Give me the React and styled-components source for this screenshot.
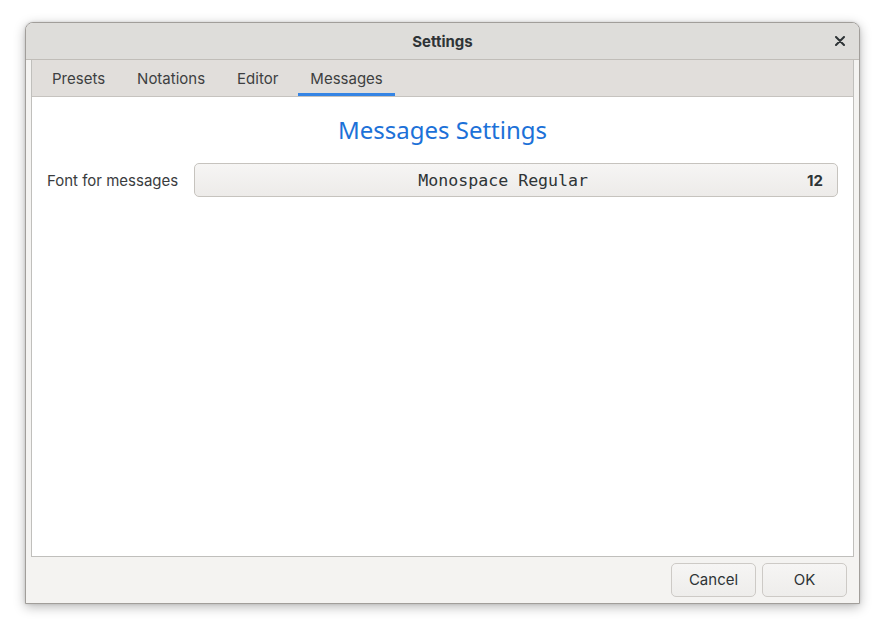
import React, { useState } from 'react';
import styled, { createGlobalStyle } from 'styled-components';

const Global = createGlobalStyle`
  html, body {
    margin: 0;
    padding: 0;
    background: #ffffff;
    font-family: Inter, "Noto Sans", sans-serif;
  }
  #root {
    width: 885px;
    height: 631px;
  }
`;

const Page = styled.div`
  width: 885px;
  height: 631px;
  padding: 22px 25px 29px 25px;
  box-sizing: border-box;
`;

const Window = styled.div`
  height: 100%;
  display: flex;
  flex-direction: column;
  border: 1px solid #a19e9a;
  border-radius: 8px 8px 0 0;
  background: #f6f5f4;
  box-shadow: 0 3px 12px rgba(0, 0, 0, 0.28), 0 0 3px rgba(0, 0, 0, 0.12);
  overflow: hidden;
`;

const TitleBar = styled.div`
  height: 36px;
  flex-shrink: 0;
  display: grid;
  grid-template-columns: 40px 1fr 40px;
  align-items: center;
  background: #deddda;
  border-bottom: 1px solid #c0bdb8;
`;

const Title = styled.div`
  grid-column: 2;
  text-align: center;
  font-size: 15px;
  font-weight: 700;
  color: #2e3436;
`;

const CloseBtn = styled.button`
  justify-self: end;
  margin-right: 10px;
  width: 18px;
  height: 18px;
  padding: 0;
  border: none;
  background: transparent;
  display: flex;
  align-items: center;
  justify-content: center;
  cursor: pointer;
`;

const Body = styled.div`
  flex: 1;
  display: flex;
  flex-direction: column;
  padding: 0 5px 0 5px;
  background: #f4f3f1;
`;

const Notebook = styled.div`
  flex: 1;
  display: flex;
  flex-direction: column;
  border: 1px solid #c0bfbc;
  border-top: none;
  background: #ffffff;
`;

const TabBar = styled.div`
  height: 36px;
  display: flex;
  gap: 8px;
  padding: 0 8px;
  background: #e1dedb;
  border-bottom: 1px solid #c6c3bf;
`;

const Tab = styled.button`
  position: relative;
  padding: 0 12px;
  border: none;
  background: transparent;
  font-family: Inter, "Noto Sans", sans-serif;
  font-size: 15px;
  color: #3d3f41;
  cursor: pointer;
  &::after {
    content: '';
    position: absolute;
    left: 0;
    right: 0;
    bottom: 0;
    height: 3px;
    background: ${p => (p.$active ? '#3584e4' : 'transparent')};
  }
`;

const Content = styled.div`
  flex: 1;
  padding: 17px 15px 0 15px;
  display: flex;
  flex-direction: column;
`;

const Heading = styled.h2`
  margin: 0 0 17px;
  text-align: center;
  font-family: "Noto Sans", sans-serif;
  font-weight: 400;
  font-size: 24px;
  line-height: 32px;
  color: #1c71d8;
`;

const Row = styled.div`
  display: flex;
  align-items: center;
  gap: 16px;
`;

const Label = styled.span`
  font-size: 15px;
  color: #3a3c3e;
`;

const FontButton = styled.button`
  flex: 1;
  height: 34px;
  display: flex;
  align-items: center;
  padding: 0 14px;
  border: 1px solid #c6c3be;
  border-radius: 5px;
  background: linear-gradient(#f6f5f4, #edebe9);
  cursor: pointer;
`;

const FontName = styled.span`
  flex: 1;
  padding-right: 10px;
  text-align: center;
  font-family: "DejaVu Sans Mono", monospace;
  font-size: 16.6px;
  color: #2e3436;
`;

const FontSize = styled.span`
  font-family: Inter, "Noto Sans", sans-serif;
  font-size: 15px;
  font-weight: 700;
  color: #2e3436;
`;

const Footer = styled.div`
  height: 45px;
  flex-shrink: 0;
  display: flex;
  justify-content: flex-end;
  align-items: center;
  gap: 6px;
  padding: 0 7px 1px 0;
  background: #f4f3f1;
`;

const DialogButton = styled.button`
  width: 85px;
  height: 34px;
  border: 1px solid #cdcac6;
  border-radius: 5px;
  background: linear-gradient(#f6f5f4, #eeedeb);
  font-family: Inter, "Noto Sans", sans-serif;
  font-size: 15px;
  color: #2e3436;
  cursor: pointer;
`;

const tabs = ['Presets', 'Notations', 'Editor', 'Messages'];

export default function App() {
  const [active, setActive] = useState('Messages');

  return (
    <>
      <Global />
      <Page>
        <Window>
          <TitleBar>
            <Title>Settings</Title>
            <CloseBtn aria-label="Close">
              <svg width="10" height="10" viewBox="0 0 10 10">
                <path d="M1 1 L9 9 M9 1 L1 9" stroke="#2e3436" strokeWidth="2" strokeLinecap="round" />
              </svg>
            </CloseBtn>
          </TitleBar>
          <Body>
            <Notebook>
              <TabBar>
                {tabs.map(t => (
                  <Tab key={t} $active={t === active} onClick={() => setActive(t)}>
                    {t}
                  </Tab>
                ))}
              </TabBar>
              <Content>
                <Heading>Messages Settings</Heading>
                <Row>
                  <Label>Font for messages</Label>
                  <FontButton>
                    <FontName>Monospace Regular</FontName>
                    <FontSize>12</FontSize>
                  </FontButton>
                </Row>
              </Content>
            </Notebook>
            <Footer>
              <DialogButton>Cancel</DialogButton>
              <DialogButton>OK</DialogButton>
            </Footer>
          </Body>
        </Window>
      </Page>
    </>
  );
}
